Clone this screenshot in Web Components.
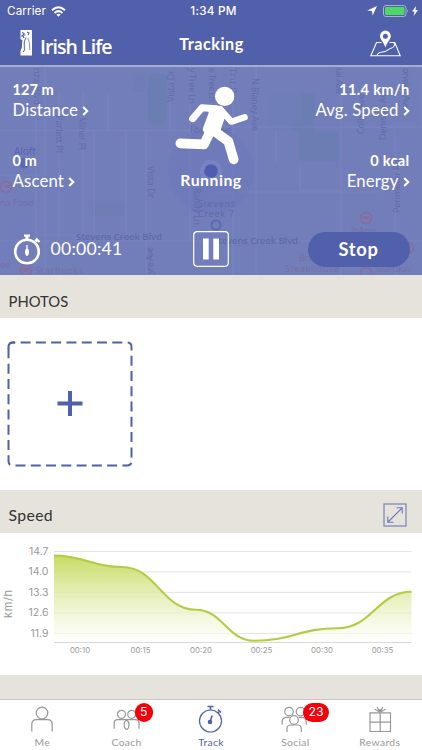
<!DOCTYPE html>
<html lang="en">
<head>
<meta charset="utf-8">
<meta name="viewport" content="width=device-width, initial-scale=1">
<title>Tracking</title>
<style>
  :root {
    --brand: #5160ab;
    --panel: #727eba;
    --band: #e6e3dc;
    --lime: #b3cc43;
    --muted: #989898;
  }
  html, body { margin: 0; height: 100%; overflow: hidden; background: #fff; }
  body { font-family: Lato, "Open Sans", sans-serif; color: #333; }
</style>
</head>
<body>
<tracking-screen></tracking-screen>

<script>
// Small base class: every element only declares its markup
class BaseElement extends HTMLElement {
  connectedCallback() {
    if (this.shadowRoot) return
    this.attachShadow({ mode: 'open' }).innerHTML = this.render()
  }
}

class StatusBar extends BaseElement {
  render() {
    return `
      <style>
        :host {
          display: grid; grid-template-columns: 1fr auto 1fr; align-items: center;
          height: 22px; padding: 0 4px 0 7px; box-sizing: border-box;
          background: var(--brand); color: #fff;
          font: 11.7px Inter, "Liberation Sans", sans-serif;
        }
        .left, .right { display: flex; align-items: center; }
        .left { gap: 5px; letter-spacing: .1px; }
        .time { font-weight: 500; letter-spacing: .25px; margin-left: 2px; }
        .right { justify-content: flex-end; gap: 6px; }
        .power { display: flex; align-items: center; gap: 3px; }
        svg { display: block; }
      </style>
      <div class="left">
        <span>Carrier</span>
        <svg width="15" height="11" viewBox="0 0 15 11" fill="none" stroke="#fff" stroke-width="2">
          <path d="M1 4.2 Q7.5 -1.8 14 4.2"/>
          <path d="M3.6 6.9 Q7.5 3.3 11.4 6.9"/>
          <path d="M7.5 10.7 L5.3 8.5 Q7.5 6.9 9.7 8.5Z" fill="#fff" stroke="none"/>
        </svg>
      </div>
      <span class="time">1:34 PM</span>
      <div class="right">
        <svg width="10" height="10" viewBox="0 0 10 10"><path d="M10 0 L5.6 9.6 L5 5 L0.2 4.4Z" fill="#fff"/></svg>
        <div class="power">
          <svg width="26" height="12" viewBox="0 0 26 12">
            <rect x=".5" y=".5" width="22.5" height="11" rx="2.4" fill="none" stroke="#a8b0d8"/>
            <rect x="2" y="2" width="19.5" height="8" rx="1" fill="#4cd964"/>
            <path d="M24.3 4 Q25.8 6 24.3 8Z" fill="#a8b0d8"/>
          </svg>
          <svg width="6" height="10" viewBox="0 0 6 10"><path d="M4.2 0 L0 5.6 H2.5 L1.6 10 L6 4.1 H3.4Z" fill="#fff"/></svg>
        </div>
      </div>`
  }
}

class NavBar extends BaseElement {
  render() {
    return `
      <style>
        :host {
          display: grid; grid-template-columns: 1fr auto 1fr; align-items: center;
          height: 45px; padding: 0 20px; box-sizing: border-box;
          background: var(--brand); color: #fff;
          border-bottom: 2px solid #a3abd6;
        }
        .logo { display: flex; align-items: center; gap: 7px; margin-top: -1px; }
        .logo span { font: 600 19.5px/24px "Open Sans", "Noto Sans", sans-serif; letter-spacing: -.95px; margin-top: 7px; }
        h1 { margin: 0 0 0 1px; font-size: 16.2px; font-weight: 700; letter-spacing: .5px; line-height: 20px; padding-top: 0; }
        svg { display: block; }
        .map { justify-self: end; margin: -1px 1px 0 0; }
      </style>
      <div class="logo">
        <svg width="13" height="26" viewBox="0 0 13 26">
          <path d="M.5 0H12V25.5H.5Z" fill="#fff"/>
          <path d="M2 2.5l2 1-1 1.5 2.5 0M1 6h2l1 2M7 2l2 1 -1 2" stroke="#5160ab" stroke-width="1.1" fill="none"/>
          <path d="M6 7.5 L4.2 12 L4.4 20 L3.2 22" stroke="#5160ab" stroke-width="1" fill="none"/>
          <path d="M7.8 8 L9.4 13 L9.8 20" stroke="#5160ab" stroke-width=".7" fill="none"/>
          <path d="M0 9 L2.3 10 L1.8 18 L0 21Z" fill="#5160ab"/>
        </svg>
        <span>Irish Life</span>
      </div>
      <h1>Tracking</h1>
      <svg class="map" width="31" height="27" viewBox="0 0 31 27" fill="none" stroke="#fff" stroke-width="1.1">
        <path d="M11.5 12.5H6.5L.8 25.7H30.2L24.8 12.5H19.5"/>
        <path d="M7 25.5C8 21 12 22.5 15 21.5S18 19 21 18.2S25 16 24.2 13" />
        <path fill="#fff" fill-rule="evenodd" stroke="none" d="M15.4 .6a5.4 5.4 0 0 0-5.4 5.4c0 3.2 3.2 5.6 5.4 11.4c2.2-5.8 5.4-8.2 5.4-11.4a5.4 5.4 0 0 0-5.4-5.4Zm0 3.2a2.5 2.5 0 1 1 0 5a2.5 2.5 0 0 1 0-5Z"/>
      </svg>`
  }
}

// Faint street map behind the live figures
class StreetMap extends BaseElement {
  render() {
    const roads = [
      'M0 130.5H190L211 127H422', 'M0 241H422', 'M36 66V275', 'M45 66V275',
      'M59 92V240', 'M83 92V240', 'M108 92V130', 'M170 66V131', 'M146 130V275',
      'M190 66V240', 'M256 66V275', 'M341 66V275', 'M341 127H422V80', 'M94 130V240',
      'M126 130V240', 'M0 175H40', 'M233 66V275', 'M300 165V190H340', 'M395 130V275',
      'M276 130V165', 'M211 192H380', 'M40 235H146'
    ].map(d => `<path d="${d}"/>`).join('')

    // [text, x, y, rotation, length]
    const streets = [
      ['nza Blvd', 34, 68, 90, 37], ['Parlett Pl', 56, 115, 90, 38], ['Miner Pl', 79, 117, 90, 33],
      ['Vista Dr', 174, 102, -90, 32], ['y Tree Ln', 189, 68, 90, 36], ['e Tree Ln', 209, 68, 90, 34],
      ['Tru Dr', 230, 68, 90, 30], ['N Blaney Ave', 252, 78, 90, 53], ['tal Ave', 336, 68, 90, 26],
      ['Colby Ave', 364, 134, -90, 40], ['Denison Ave', 386, 140, -90, 52], ['orwich Ave', 403, 68, 90, 42],
      ['Vista Dr', 148, 166, 90, 32], ['Randy Ln', 194, 188, 90, 37], ['Perimeter Rd', 400, 213, -90, 54],
      ['yre Ave', 153, 274, -90, 27], ['Forest Ave', 190, 133, 0, 42]
    ].map(([t, x, y, r, len]) => `<text textLength="${len}" transform="translate(${x} ${y}) rotate(${r})">${t}</text>`).join('')

    return `
      <style>
        :host { display: block; }
        svg { display: block; width: 100%; height: 100%; }
        text { font-family: "Open Sans", "Noto Sans", sans-serif; font-size: 9px; }
        .main { font-size: 9.5px; font-weight: 600; }
      </style>
      <svg viewBox="0 67 422 208">
        <rect y="66" width="422" height="210" fill="#727eba"/>
        <g fill="#6b7eb4">
          <rect x="148" y="74" width="19" height="50" rx="5"/>
          <path d="M301 93h14v39h23v29h-39v-30h-8v-10h10Z"/>
          <path d="M133 74h13v18h-13Z M92 202h32v14H92Z" opacity=".4"/>
          <path d="M268 93h33v38h-33Z" opacity=".3"/>
        </g>
        <g fill="none" stroke="#7983bf" stroke-width="1.2">${roads}</g>
        <circle cx="211" cy="171" r="43" fill="#6875b8" opacity=".4"/>
        <circle cx="211" cy="171" r="11" fill="#7884c1"/>
        <circle cx="211" cy="171" r="6.8" fill="#4f5db0"/>
        <g fill="#616ca8">${streets}</g>
        <g fill="#5f6ba8">
          <text class="main" x="76" y="240" textLength="86">Stevens Creek Blvd</text>
          <text class="main" x="213" y="244" textLength="85">Stevens Creek Blvd</text>
          <text x="198" y="207" textLength="37">Stevens</text>
          <text x="198" y="217" textLength="36">Creek 7</text>
        </g>
        <circle cx="216" cy="225" r="4.5" fill="none" stroke="#5b69b2" stroke-width="2"/>
        <circle cx="24" cy="163" r="5.5" fill="#5c69b6"/>
        <text x="14" y="155" fill="#5964b8" style="font-size:10px">Aloft</text>
        <g fill="none" stroke="#856f9f" stroke-width="1.8">
          <circle cx="6" cy="187" r="5.5"/>
          <circle cx="26" cy="270" r="5.5"/>
          <circle cx="366" cy="218" r="5.5"/>
          <circle cx="366" cy="273" r="5.5"/>
          <circle cx="408" cy="248" r="5.5"/>
        </g>
        <path d="M3 184h1l1 4h4l1-3H5M363 216h6v3h-6Z M23 268h6v4h-6Z" fill="#856f9f"/>
        <g fill="#776ea4">
          <text x="0" y="206" textLength="34">na Food</text>
          <text x="0" y="268">ee</text>
          <text x="35" y="274" textLength="48" y="273">Starbucks</text>
          <text x="351" y="234">JoAnn</text>
          <text x="299" y="261">Brandy's</text>
          <text x="285" y="272" textLength="54">Steakhouse</text>
          <text x="376" y="272">Marukai</text>
        </g>
      </svg>`
  }
}

class StatItem extends BaseElement {
  render() {
    return `
      <style>
        :host { display: flex; flex-direction: column; align-items: flex-start; height: 71px; color: #fff; }
        :host([align="end"]) { align-items: flex-end; }
        .value { font-size: 14.6px; font-weight: 700; line-height: 20px; padding-top: 1px; }
        :host([align="end"]) .value { letter-spacing: .3px; }
        .label { display: flex; align-items: center; gap: 4px; font-size: 16.8px; line-height: 20px; letter-spacing: .15px; }
        svg { display: block; margin-top: 2px; }
      </style>
      <div class="value"><slot name="value"></slot></div>
      <div class="label">
        <slot></slot>
        <svg width="7" height="10" viewBox="0 0 7 10" fill="none" stroke="#fff" stroke-width="2.1"><path d="M1.2 1 L5.2 5 L1.2 9"/></svg>
      </div>`
  }
}

class RunnerFigure extends BaseElement {
  render() {
    return `
      <style>
        :host { display: flex; flex-direction: column; align-items: center; color: #fff; }
        svg { display: block; }
        b { font-size: 15.8px; line-height: 20px; letter-spacing: .5px; margin-top: 4px; }
      </style>
      <svg width="76" height="80" viewBox="37 30 228 240" fill="none" stroke="#fff" stroke-linecap="round" stroke-linejoin="round">
        <circle cx="192" cy="61" r="29" fill="#fff" stroke="none"/>
        <path d="M96 128 L124 95 L165 98" stroke-width="21"/>
        <path d="M182 103 L212 137 L252 124" stroke-width="19"/>
        <path d="M59 202 L130 205 L152 160" stroke-width="29"/>
        <path d="M162 166 L203 196 L219 250" stroke-width="29"/>
        <path d="M146 92 L182 94 L193 112 L172 172 L140 178 L130 160 L148 112Z" fill="#fff" stroke-width="8"/>
      </svg>
      <b><slot></slot></b>`
  }
}

class SessionControls extends BaseElement {
  render() {
    return `
      <style>
        :host { display: grid; grid-template-columns: 1fr 36px 1fr; align-items: center; height: 36px; color: #fff; }
        .timer { display: flex; align-items: center; gap: 10px; font-size: 17.6px; letter-spacing: .25px; }
        .timer span { margin-top: -2px; }
        svg { display: block; }
        button {
          border: 0; padding: 0; color: #fff; background: var(--brand); justify-self: end;
          width: 102px; height: 35px; border-radius: 18px;
          font: 700 18.3px/33px Lato, sans-serif; letter-spacing: .7px;
        }
      </style>
      <div class="timer">
        <svg width="28" height="31" viewBox="0 0 28 31" fill="none" stroke="#fff">
          <circle cx="14" cy="17.5" r="11.8" stroke-width="2.6"/>
          <path d="M14 2V5.5 M22.5 7.5 L24.5 5.5" stroke-width="3"/>
          <path d="M11 1.6H17 M23 4.5L26.5 8" stroke-width="2.2"/>
          <path d="M14 11V22" stroke-width="1.3"/>
          <ellipse cx="14" cy="18" rx="2" ry="3.5" fill="#fff" stroke="none"/>
        </svg>
        <span>00:00:41</span>
      </div>
      <svg width="36" height="36" viewBox="0 0 36 36">
        <rect x=".7" y=".7" width="34.6" height="34.6" rx="3.5" fill="none" stroke="#fff" stroke-width="1.2"/>
        <path d="M10 7.5h5.7v21H10Z M20.3 7.5h5.7v21h-5.7Z" fill="#fff"/>
      </svg>
      <button>Stop</button>`
  }
}

class ActivityPanel extends BaseElement {
  render() {
    return `
      <style>
        :host {
          display: block; position: relative; height: 208px; padding: 12px 12.5px 0;
          box-sizing: border-box; background: var(--panel); overflow: hidden;
        }
        street-map { position: absolute; inset: 0; }
        .content { position: relative; }
        .figures { display: grid; grid-template-columns: 1fr 80px 1fr; height: 152px; }
        .right { justify-self: end; }
        .running { margin: 7px 0 0; }
      </style>
      <street-map></street-map>
      <div class="content">
        <div class="figures">
          <div>
            <stat-item><span slot="value">127 m</span>Distance</stat-item>
            <stat-item><span slot="value">0 m</span>Ascent</stat-item>
          </div>
          <runner-figure class="running">Running</runner-figure>
          <div class="right">
            <stat-item align="end"><span slot="value">11.4 km/h</span>Avg. Speed</stat-item>
            <stat-item align="end"><span slot="value">0 kcal</span>Energy</stat-item>
          </div>
        </div>
        <session-controls></session-controls>
      </div>`
  }
}

class SectionBand extends BaseElement {
  render() {
    return `
      <style>
        :host {
          display: flex; align-items: center; justify-content: space-between;
          height: 43px; padding: 8px 15px 0 8.5px; box-sizing: border-box;
          background: var(--band); color: #333; font-size: 14.8px; line-height: 20px;
        }
      </style>
      <slot></slot><slot name="action"></slot>`
  }
}

class ExpandIcon extends BaseElement {
  render() {
    return `
      <style>:host { display: block; } svg { display: block; }</style>
      <svg width="24" height="24" viewBox="0 0 24 24" fill="none" stroke="#6f7bb9" stroke-width="1.1">
        <rect x="1" y="1" width="22" height="22"/>
        <path d="M5 19 L19 5 M13.5 4.8H19.2V10.5 M4.8 13.5V19.2H10.5"/>
      </svg>`
  }
}

class PhotoAdd extends BaseElement {
  render() {
    return `
      <style>:host { display: block; width: 126px; } svg { display: block; }</style>
      <svg width="126" height="126" viewBox="0 0 126 126" fill="none" stroke="#5160ab">
        <path stroke-width="2" stroke-dasharray="10 5.28" stroke-dashoffset="-7.6"
          d="M6 1.5H120Q124.5 1.5 124.5 6V120Q124.5 124.5 120 124.5H6Q1.5 124.5 1.5 120V6Q1.5 1.5 6 1.5"/>
        <path stroke-width="2" d="M1.5 8V6Q1.5 1.5 6 1.5H8"/>
        <path stroke-width="4" d="M50.5 62.5H75.500 M63 50V75"/>
      </svg>`
  }
}

class SpeedChart extends BaseElement {
  render() {
    // drawing space has its origin at the top-left of the chart card
    const knots = [[54, 22.6], [122, 34], [196, 76.7], [254, 107.7], [338, 95.2], [411.5, 58.8]]
    const line = knots.map(([x, y], i) => {
      if (!i) return `M${x} ${y}`
      const [px, py] = knots[i - 1]
      const h = (x - px) * 0.46
      return `C${px + h} ${py} ${x - h} ${y} ${x} ${y}`
    }).join(' ')
    const ticksY = [['14.7', 18.4], ['14.0', 38.9], ['13.3', 59.4], ['12.6', 79.9], ['11.9', 100.4]]
    const ticksX = [['00:10', 80], ['00:15', 140.5], ['00:20', 201], ['00:25', 261.5], ['00:30', 322], ['00:35', 382.5]]

    return `
      <style>
        :host { display: block; height: 142px; background: #fff; }
        svg { display: block; }
        text { font-family: Inter, "Open Sans", sans-serif; fill: #999; }
        .y text { font-size: 10.5px; text-anchor: end; }
        .x text { font-size: 7.8px; text-anchor: middle; }
      </style>
      <svg width="422" height="142" viewBox="0 0 422 142">
        <defs>
          <linearGradient id="fade" gradientUnits="userSpaceOnUse" x1="0" y1="22" x2="0" y2="110">
            <stop offset="0" stop-color="#c6db60"/>
            <stop offset="1" stop-color="#fff" stop-opacity=".6"/>
          </linearGradient>
        </defs>
        <g stroke="#e3e3e3">${ticksY.map(([, y]) => `<path d="M54 ${y}H411.5"/>`).join('')}</g>
        <path d="${line} V109.5H54Z" fill="url(#fade)"/>
        <path d="M54 109.5H411.5" stroke="#d9d9d9"/>
        <path d="${line}" fill="none" stroke="#b3cc43" stroke-width="2.1"/>
        <g class="y">${ticksY.map(([t, y]) => `<text x="48.5" y="${y + 3.3}">${t}</text>`).join('')}</g>
        <g class="x">${ticksX.map(([t, x]) => `<text x="${x}" y="120.3">${t}</text>`).join('')}</g>
        <text transform="translate(12 85) rotate(-90)" font-size="11" textLength="28">km/h</text>
      </svg>`
  }
}

const ICONS = {
  me: `<circle cx="16" cy="8" r="5.8"/><path d="M5.8 26.5V19.5Q5.8 14.6 10.5 14.6H21.5Q26.2 14.6 26.2 19.5V26.5"/>`,
  coach: `<circle cx="10.5" cy="9.3" r="4"/><circle cx="20.7" cy="9.3" r="4"/>
    <path d="M3.2 23.8V18Q3.2 14.6 6.8 14.6H24.5Q28 14.6 28 18V23.8"/>
    <path d="M15.6 15Q18 16.5 18 19.5Q18 24 15.6 24.3Q13.2 24 13.2 19.5Q13.2 16.5 15.6 15Z"/>`,
  track: `<circle cx="15.5" cy="16" r="11"/><path d="M15.5 5V1.8M12.5 1.5H18.5M22.5 8L24.5 6M23 4.5L26 7.5" stroke-width="1.5"/>
    <path d="M17.2 10.5L14.7 17.5" stroke-width="1.6"/><circle cx="15" cy="17" r="1.7" fill="currentColor"/>`,
  social: `<circle cx="10" cy="6.6" r="4.3"/><circle cx="21.5" cy="6.6" r="4.3"/>
    <circle cx="15" cy="15" r="4.3" fill="#fff"/>
    <path d="M3.2 19.8V17Q3.2 12.8 7 12.3H10.5M19.6 12.3H23.5Q27.2 12.8 27.2 17V19.8"/>
    <path d="M8 27V24Q8 20 11.5 20H18.8Q22.3 20 22.3 24V27"/>`,
  rewards: `<path d="M6 7.8H26.5V26.5H6ZM6 17.2H26.5M16.2 7.5V26.5"/>
    <path d="M16.2 7.3L10.8 4.3M16.2 7.3L13 2M16.2 7.3L18.8 2M16.2 7.3L21.5 4.3M16.2 7.3V4" stroke-width="1.3"/>`
}

class TabItem extends BaseElement {
  render() {
    const badge = this.getAttribute('badge')
    return `
      <style>
        :host { display: flex; flex-direction: column; align-items: center; color: var(--muted); padding-top: 5px; }
        :host([active]) { color: var(--brand); }
        .icon { position: relative; width: 32px; height: 30px; }
        svg { display: block; }
        .label { font-size: 10.3px; line-height: 14px; letter-spacing: .35px; }
        .badge {
          position: absolute; left: 24px; top: -2px; min-width: 18.5px; height: 18.5px;
          padding: 0 5px; box-sizing: border-box; border-radius: 10px; background: #f3000a;
          color: #fff; font: 12.3px/18.5px Inter, sans-serif; text-align: center;
        }
      </style>
      <div class="icon">
        <svg width="32" height="28" viewBox="0 0 32 28" fill="none" stroke="currentColor" stroke-width="1.2">${ICONS[this.getAttribute('icon')]}</svg>
        ${badge ? `<span class="badge">${badge}</span>` : ''}
      </div>
      <span class="label"><slot></slot></span>`
  }
}

class TabBar extends BaseElement {
  render() {
    return `
      <style>
        :host {
          display: grid; grid-template-columns: repeat(5, 1fr); height: 51px; box-sizing: border-box;
          background: #fff; border-top: 1px solid #c9c7c3;
        }
      </style>
      <slot></slot>`
  }
}

class TrackingScreen extends BaseElement {
  render() {
    return `
      <style>
        :host { display: flex; flex-direction: column; height: 750px; width: 422px; overflow: hidden; background: #fff; }
        .photos { height: 172px; padding: 23px 0 0 7px; box-sizing: border-box; }
        .speed { font-size: 15.8px; letter-spacing: .35px; padding-top: 7px; }
        .rest { flex: 1; background: var(--band); }
      </style>
      <status-bar></status-bar>
      <nav-bar></nav-bar>
      <activity-panel></activity-panel>
      <section-band>PHOTOS</section-band>
      <div class="photos"><photo-add></photo-add></div>
      <section-band class="speed">Speed<expand-icon slot="action"></expand-icon></section-band>
      <speed-chart></speed-chart>
      <div class="rest"></div>
      <tab-bar>
        <tab-item icon="me">Me</tab-item>
        <tab-item icon="coach" badge="5">Coach</tab-item>
        <tab-item icon="track" active>Track</tab-item>
        <tab-item icon="social" badge="23">Social</tab-item>
        <tab-item icon="rewards">Rewards</tab-item>
      </tab-bar>`
  }
}

customElements.define('status-bar', StatusBar)
customElements.define('nav-bar', NavBar)
customElements.define('street-map', StreetMap)
customElements.define('stat-item', StatItem)
customElements.define('runner-figure', RunnerFigure)
customElements.define('session-controls', SessionControls)
customElements.define('activity-panel', ActivityPanel)
customElements.define('section-band', SectionBand)
customElements.define('expand-icon', ExpandIcon)
customElements.define('photo-add', PhotoAdd)
customElements.define('speed-chart', SpeedChart)
customElements.define('tab-item', TabItem)
customElements.define('tab-bar', TabBar)
customElements.define('tracking-screen', TrackingScreen)
</script>
</body>
</html>
